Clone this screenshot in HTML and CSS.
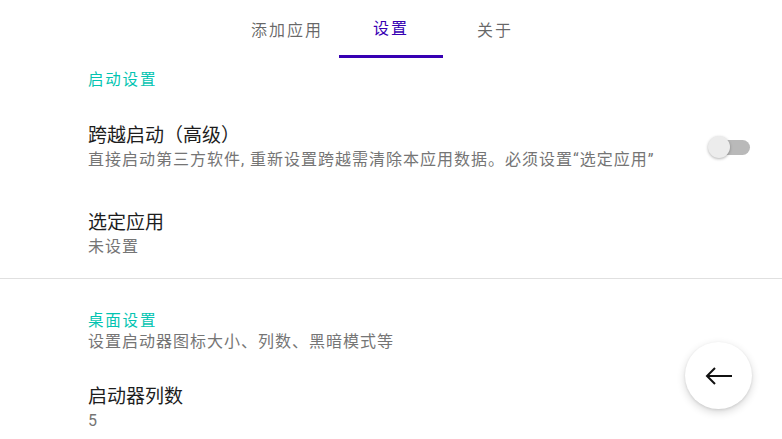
FILE: index.html
```html
<!DOCTYPE html>
<html>
  <head>
    <title>设置</title>
    <meta name="viewport" content="width=device-width, initial-scale=1">
    <link rel="stylesheet" href="styles.css">
  </head>
  <body>
    <div class="tabs">
      <div class="tab">添加应用</div>
      <div class="tab active">设置</div>
      <div class="tab">关于</div>
    </div>

    <div class="group first">
      <div class="category">启动设置</div>
      <div class="pref pref-launch">
        <div class="pref-text">
          <div class="title">跨越启动（高级）</div>
          <div class="summary">直接启动第三方软件, 重新设置跨越需清除本应用数据。必须设置“选定应用”</div>
        </div>
        <div class="switch"><span class="track"></span><span class="thumb"></span></div>
      </div>
      <div class="pref pref-app">
        <div class="pref-text">
          <div class="title">选定应用</div>
          <div class="summary">未设置</div>
        </div>
      </div>
    </div>

    <div class="divider"></div>

    <div class="group second">
      <div class="category">桌面设置</div>
      <div class="summary">设置启动器图标大小、列数、黑暗模式等</div>
      <div class="pref pref-cols">
        <div class="pref-text">
          <div class="title">启动器列数</div>
          <div class="summary">5</div>
        </div>
      </div>
    </div>

    <button class="fab">
      <svg viewBox="0 0 28 18" width="28" height="18">
        <path d="M27 9H2M10 1L2 9l8 8" fill="none" stroke="#111" stroke-width="2"/>
      </svg>
    </button>
  </body>
</html>
```

FILE: styles.css
```css
html {height:100%;}
body {margin:0; height:100%; overflow:hidden; background:#fff; font-family:Roboto,"Noto Sans CJK SC",sans-serif; color:rgba(0,0,0,.87);}

.tabs {display:flex; justify-content:center; height:58px;}
.tab {width:104px; height:58px; box-sizing:border-box; padding-top:3px; line-height:55px; text-align:center; font-size:16px; letter-spacing:2px; color:rgba(0,0,0,.6);}
.tab.active {color:#3700b3; border-bottom:3px solid #3700b3; line-height:52px;}

.group {padding:0 32px 0 88px;}
.group.first {padding-top:12px;}
.group.second {padding-top:32px;}
.category {font-size:15.5px; letter-spacing:1.8px; line-height:20px; color:#03c4b1;}

.pref {display:flex; align-items:center; justify-content:space-between;}
.pref-launch {margin-top:34px;}
.pref-app {margin-top:40px;}
.pref-cols {margin-top:32px;}
.title {font-size:19px; line-height:24px; color:#1d1d1d;}
.summary {font-size:16px; line-height:22px; letter-spacing:1px; color:#757575;}
.pref-text .summary {margin-top:1px;}

.switch {position:relative; width:42px; height:22px; flex-shrink:0; margin-bottom:2px;}
.track {position:absolute; left:4px; right:0; top:4px; height:15px; border-radius:8px; background:#b9b9b9;}
.thumb {position:absolute; left:0; top:0; width:22px; height:22px; border-radius:50%; background:#ececec; box-shadow:0 1px 3px rgba(0,0,0,.3);}

.divider {height:1px; background:#e0e0e0; margin-top:20px;}

.fab {position:fixed; right:30px; bottom:30px; width:67px; height:67px; border:0; border-radius:50%; background:#fff; box-shadow:0 3px 8px rgba(0,0,0,.16), 0 1px 3px rgba(0,0,0,.1); display:flex; align-items:center; justify-content:center; padding:0;}
.fab svg {display:block;}
```
